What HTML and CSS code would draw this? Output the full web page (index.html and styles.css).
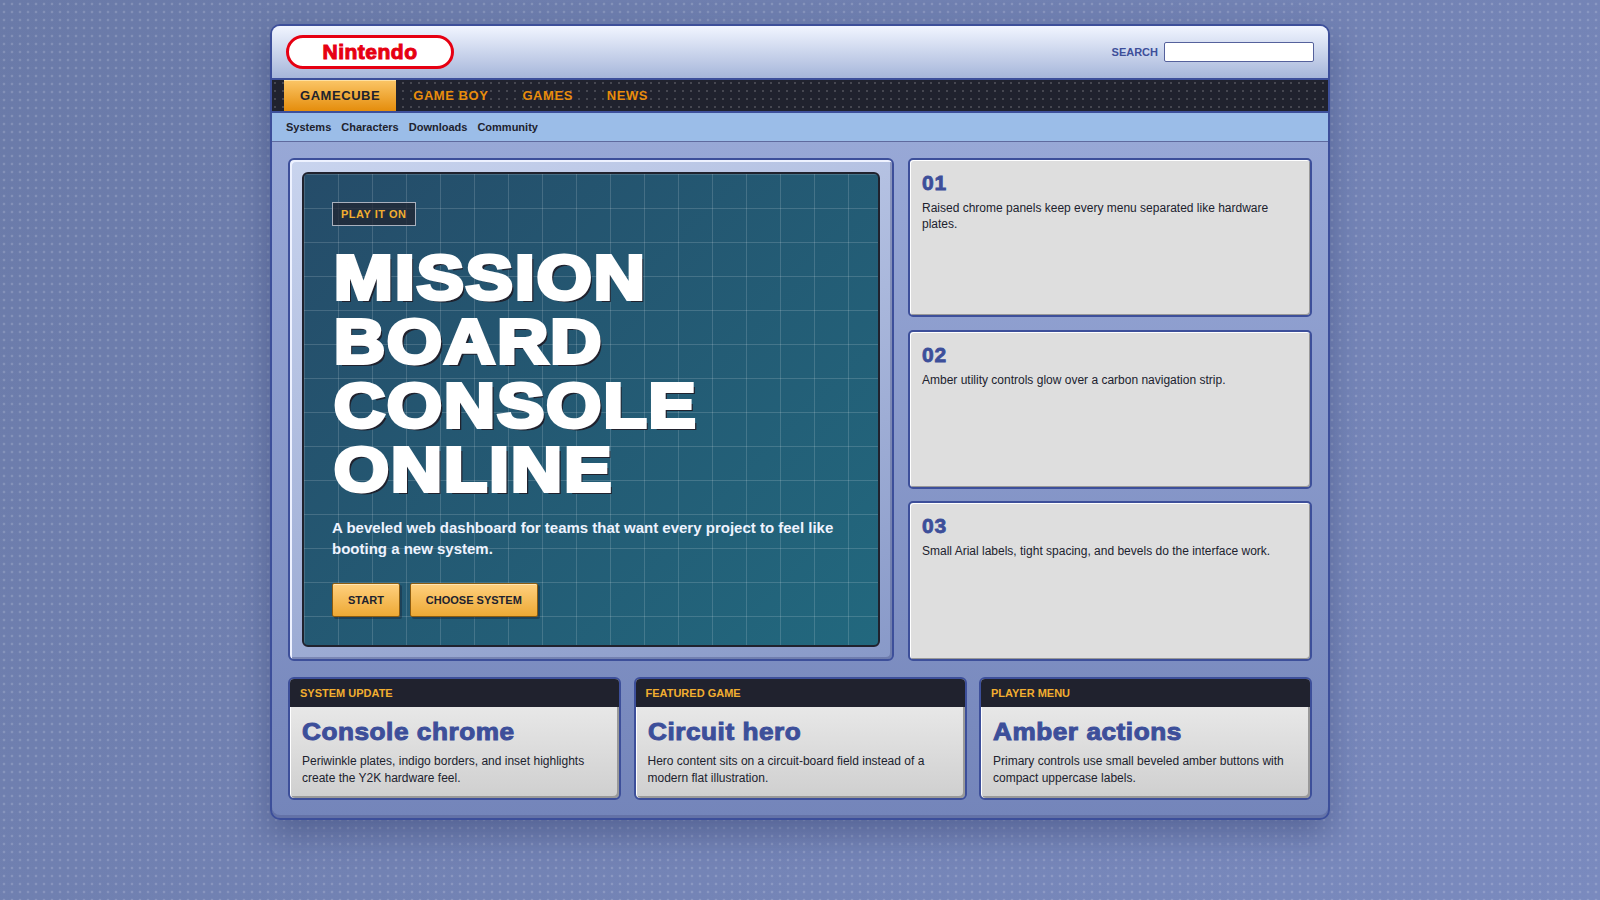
FILE: index.html
```html
<!DOCTYPE html>
<html>
<head>
    <meta charset="utf-8">
    <title>Mission Board Console</title>
    <link rel="stylesheet" href="styles.css">
</head>
<body>
    <div class="shell">
        <header class="top">
            <div class="logo"><span>Nintendo</span></div>
            <label class="search">SEARCH <input type="text"></label>
        </header>
        <nav class="nav">
            <a class="active">GAMECUBE</a>
            <a>GAME BOY</a>
            <a>GAMES</a>
            <a>NEWS</a>
        </nav>
        <div class="subnav">
            <a>Systems</a>
            <a>Characters</a>
            <a>Downloads</a>
            <a>Community</a>
        </div>
        <div class="main">
            <div class="upper">
                <section class="plate">
                    <div class="hero">
                        <span class="tag">PLAY IT ON</span>
                        <h1>MISSION BOARD CONSOLE ONLINE</h1>
                        <p>A beveled web dashboard for teams that want every project to feel like booting a new system.</p>
                        <div class="actions">
                            <a class="btn">START</a>
                            <a class="btn">CHOOSE SYSTEM</a>
                        </div>
                    </div>
                </section>
                <div class="stack">
                    <div class="note">
                        <h2>01</h2>
                        <p>Raised chrome panels keep every menu separated like hardware plates.</p>
                    </div>
                    <div class="note">
                        <h2>02</h2>
                        <p>Amber utility controls glow over a carbon navigation strip.</p>
                    </div>
                    <div class="note">
                        <h2>03</h2>
                        <p>Small Arial labels, tight spacing, and bevels do the interface work.</p>
                    </div>
                </div>
            </div>
            <div class="lower">
                <article class="card">
                    <div class="card-head">SYSTEM UPDATE</div>
                    <div class="card-body">
                        <h3>Console chrome</h3>
                        <p>Periwinkle plates, indigo borders, and inset highlights create the Y2K hardware feel.</p>
                    </div>
                </article>
                <article class="card">
                    <div class="card-head">FEATURED GAME</div>
                    <div class="card-body">
                        <h3>Circuit hero</h3>
                        <p>Hero content sits on a circuit-board field instead of a modern flat illustration.</p>
                    </div>
                </article>
                <article class="card">
                    <div class="card-head">PLAYER MENU</div>
                    <div class="card-body">
                        <h3>Amber actions</h3>
                        <p>Primary controls use small beveled amber buttons with compact uppercase labels.</p>
                    </div>
                </article>
            </div>
        </div>
    </div>
</body>
</html>
```

FILE: styles.css
```css
* {
    box-sizing: border-box;
}
html, body {
    height: 100%;
}
body {
    margin: 0;
    padding-top: 24px;
    font-family: "Liberation Sans", Arial, sans-serif;
    color: #20222e;
    background-color: #7282b4;
    background-image:
        radial-gradient(circle at 4px 4px, rgba(255,255,255,0.16) 1px, transparent 1.7px),
        linear-gradient(135deg, #6a7aa8, #7a8abe);
    background-size: 8px 8px, 100% 100%;
    overflow: hidden;
}
.shell {
    width: 1060px;
    height: 796px;
    margin: 0 auto;
    border: 2px solid #3d4f9a;
    border-radius: 10px;
    background: linear-gradient(180deg, #9eaedb, #7485ba);
    box-shadow: inset 0 -3px 0 rgba(50,60,110,0.25), 0 14px 32px rgba(30,40,90,0.35);
    overflow: hidden;
}
.top {
    height: 52px;
    padding: 9px 14px 0 14px;
    background: linear-gradient(180deg, #f1f5ff, #a6b6da);
    display: flex;
    justify-content: space-between;
    align-items: flex-start;
}
.logo {
    width: 168px;
    height: 34px;
    border: 3px solid #e60012;
    border-radius: 17px;
    background: #fff;
    display: flex;
    justify-content: center;
    align-items: center;
}
.logo span {
    color: #e60012;
    font-size: 21px;
    font-weight: 700;
    letter-spacing: 0.5px;
    -webkit-text-stroke: 1px #e60012;
}
.search {
    display: flex;
    align-items: center;
    gap: 6px;
    margin-top: 7px;
    font-size: 11px;
    font-weight: 700;
    color: #3d4f9a;
}
.search input {
    width: 150px;
    height: 20px;
    border: 1px solid #55619c;
    border-radius: 2px;
    background: #fff;
    padding: 0;
    margin: 0;
}
.nav {
    height: 35px;
    border-top: 2px solid #3d4f9a;
    border-bottom: 2px solid #3d4f9a;
    padding-left: 12px;
    background-color: #20222e;
    background-image: radial-gradient(circle at 3px 3px, rgba(255,255,255,0.17) 1px, transparent 1.5px);
    background-size: 8px 8px;
    display: flex;
}
.nav a {
    padding: 0 17px;
    font-size: 13px;
    font-weight: 700;
    letter-spacing: 0.55px;
    line-height: 31px;
    color: #e98d0c;
}
.nav .active {
    padding: 0 16px;
    color: #20222e;
    background: linear-gradient(180deg, #fbc667, #e58d0c);
    box-shadow: inset 0 1px 0 #ffe0a0;
}
.subnav {
    height: 29px;
    padding-left: 14px;
    background: #9bbde8;
    border-bottom: 1px solid #5f6a9e;
    display: flex;
    gap: 10px;
    align-items: center;
    font-size: 11px;
    font-weight: 700;
}
.main {
    padding: 16px 16px 0 16px;
}
.upper {
    display: grid;
    grid-template-columns: 1.5fr 1fr;
    gap: 14px;
    height: 502.5px;
}
.plate {
    border: 2px solid #3d4f9a;
    border-radius: 6px;
    padding: 12px;
    background: linear-gradient(160deg, #c9d4ee, #8899c8);
    box-shadow: inset 2px 2px 0 #eef2ff, inset -2px -2px 0 rgba(60,70,120,0.35);
}
.hero {
    height: 100%;
    border: 2px solid #20222e;
    border-radius: 6px;
    padding: 28px 28px 0 28px;
    color: #fff;
    background-color: #24506b;
    background-image:
        linear-gradient(rgba(255,255,255,0.15) 1px, transparent 1px),
        linear-gradient(90deg, rgba(255,255,255,0.15) 1px, transparent 1px),
        linear-gradient(135deg, #254c69, #22687e);
    background-size: 34px 34px, 34px 34px, 100% 100%;
}
.tag {
    display: inline-block;
    height: 24px;
    padding: 0 8px;
    border: 1px solid #a9b0bd;
    background: rgba(32,34,46,0.72);
    color: #f2ae30;
    font-size: 11px;
    font-weight: 700;
    letter-spacing: 0.5px;
    line-height: 22px;
}
.hero h1 {
    margin: 19px 0 16px 2px;
    width: 400px;
    font-size: 63px;
    line-height: 64px;
    font-weight: 700;
    letter-spacing: 1.9px;
    -webkit-text-stroke: 4px #fff;
    text-shadow: 3px 3px 0 #20222e;
    transform: scaleX(1.12);
    transform-origin: left center;
}
.hero p {
    margin: 0;
    font-size: 15px;
    line-height: 21px;
    font-weight: 700;
    color: #eef3ff;
}
.actions {
    margin-top: 24px;
    display: flex;
    gap: 10px;
}
.btn {
    padding: 0 15px;
    height: 34px;
    line-height: 32px;
    border: 1px solid #8c5c10;
    border-radius: 2px;
    background: linear-gradient(180deg, #ffd07e, #eda935);
    box-shadow: inset 0 1px 0 #ffe6b4, 2px 2px 0 rgba(20,30,50,0.4);
    color: #20222e;
    font-size: 11px;
    font-weight: 700;
}
.stack {
    display: grid;
    grid-template-rows: 1fr 1fr 1fr;
    gap: 12.5px;
}
.note {
    border: 2px solid #3d4f9a;
    border-radius: 5px;
    padding: 10px 12px;
    background: #dedede;
    box-shadow: inset 1px 1px 0 #fff, inset -1px -1px 0 #999;
}
.note h2 {
    margin: 0 0 5px 0;
    font-size: 21px;
    line-height: 25px;
    font-weight: 700;
    letter-spacing: 0.8px;
    color: #3d4f9a;
    -webkit-text-stroke: 0.8px #3d4f9a;
}
.note p {
    margin: 0;
    font-size: 12px;
    line-height: 16px;
}
.lower {
    display: grid;
    grid-template-columns: repeat(3, 1fr);
    gap: 12.5px;
    margin-top: 16.5px;
}
.card {
    height: 123px;
    border: 2px solid #3d4f9a;
    border-radius: 6px;
    overflow: hidden;
    background: linear-gradient(180deg, #efefef, #cfcfcf);
    box-shadow: inset 1px 0 0 #fff, inset -2px -2px 0 #999;
}
.card-head {
    height: 28px;
    padding-left: 10px;
    background: #20222e;
    color: #f2ae30;
    font-size: 11px;
    font-weight: 700;
    line-height: 28px;
}
.card-body {
    padding: 11px 12px;
}
.card-body h3 {
    margin: 0 0 7px 0;
    font-size: 24px;
    line-height: 28px;
    font-weight: 700;
    letter-spacing: 0.5px;
    color: #3d4f9a;
    -webkit-text-stroke: 1px #3d4f9a;
    transform: scaleX(1.09);
    transform-origin: left center;
}
.card-body p {
    margin: 0;
    font-size: 12px;
    line-height: 17px;
}
```
